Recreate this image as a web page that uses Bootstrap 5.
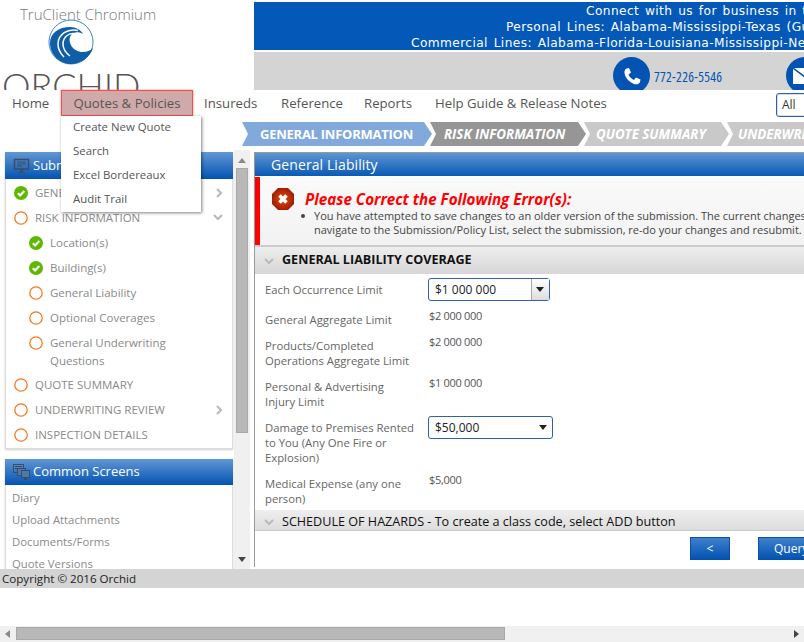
<!DOCTYPE html>
<html lang="en">
<head>
<meta charset="utf-8">
<title>Orchid</title>
<link href="https://cdn.jsdelivr.net/npm/bootstrap@5.3.0/dist/css/bootstrap.min.css" rel="stylesheet">
<style>
html,body{height:642px;overflow:hidden;background:#fff}
body{font-family:"Open Sans","Noto Sans",sans-serif;font-size:12px;color:#555;width:804px;position:relative}
svg{display:block;flex:none}
.top-head{height:90px;overflow:hidden}
.logo-box{width:254px;height:90px;overflow:hidden;flex:none}
.logo-title{font-size:15px;line-height:20px;color:#7a7a7a;padding:4px 0 0 20px;font-weight:300;height:19px;white-space:nowrap}
.logo-mark{margin:0 0 0 48px;height:46px}
.logo-word{font-family:"Lato",sans-serif;font-weight:300;font-size:36px;line-height:28px;color:#555;padding-left:2px;margin-top:6px}
.head-right{width:550px;padding-top:2px;overflow:hidden}
.blue-band{background:#0358b8;height:48px;color:#fff;font-family:"DejaVu Sans",sans-serif;font-size:12.2px;line-height:16px;white-space:nowrap;letter-spacing:.4px;word-spacing:1.5px;overflow:hidden;padding-top:1px}
.ln1{padding-left:332px}.ln2{padding-left:252px}.ln3{padding-left:157px}
.gray-band{background:#d4d4d4;height:38px;margin-top:2px;overflow:hidden;align-items:flex-start;padding:5px 0 0 359px}
.round-ic{width:37px;height:37px;border-radius:50%;background:#0353b2;flex:none;align-items:center;justify-content:center}
.tel-txt{color:#0353b2;font-size:13.5px;line-height:18px;margin:11px 0 0 4px;width:132px;flex:none;font-stretch:condensed;letter-spacing:.3px;white-space:nowrap}
.main-nav{height:26px;position:relative;font-size:13.2px;color:#555;align-items:center}
.nav-it{white-space:nowrap;line-height:26px;flex:none}
.nav-home{margin-left:12px;width:49px}
.nav-sel{width:132px;height:26px;background:#d0aaaa;border:1px solid #f25050;text-align:center;line-height:24px;box-shadow:0 0 2px #f07070}
.nav-ins{margin-left:11px;width:77px}.nav-ref{width:83px}.nav-rep{width:71px}.nav-help{width:341px}
.all-sel{width:60px;height:24px;border:1px solid #2c62b0;border-radius:3px;background:#fff;padding-left:5px;line-height:22px;font-size:12px;color:#333;box-shadow:inset 0 0 0 1px #ddd;margin-top:3px;align-self:flex-start;flex:none}
.drop-menu{position:absolute;left:61px;top:26px;width:140px;height:96px;background:#fff;box-shadow:1px 1px 3px rgba(0,0,0,.5);z-index:5;padding-left:12px;font-size:11.4px;color:#555}
.drop-menu div{height:24px;line-height:22px}
.step-row{height:34px;padding:6px 0 0 242px;overflow:hidden}
.step-one{height:24px;line-height:24px;color:#fff;font-weight:700;font-size:13.3px;white-space:nowrap;flex:none;font-style:italic}
.step-a{width:190px;background:#82a9dc;padding-left:18px;font-size:13px;letter-spacing:-.25px;font-style:normal;clip-path:polygon(0 0,182px 0,190px 50%,182px 100%,0 100%,6px 50%)}
.step-b{width:156px;margin-left:-2px;background:#969696;padding-left:14px;clip-path:polygon(0 0,148px 0,156px 50%,148px 100%,0 100%,6px 50%)}
.step-c{width:145px;margin-left:-2px;background:#c9c9c9;padding-left:12px;clip-path:polygon(0 0,137px 0,145px 50%,137px 100%,0 100%,6px 50%)}
.step-d{width:120px;margin-left:-2px;background:#c9c9c9;padding-left:11px;clip-path:polygon(0 0,120px 0,120px 100%,0 100%,6px 50%)}
.work-area{height:419px;overflow:hidden}
.side-col{width:234px;flex:none;padding:2px 0 0 5px;overflow:hidden;height:419px}
.side-card{width:228px;background:#fff;border:1px solid #ddd;border-top:0;box-shadow:0 1px 2px rgba(0,0,0,.2);height:297px;font-size:11.5px;color:#8a8a8a}
.side-card2{height:200px;margin-top:10px}
.blue-head{height:27px;background:linear-gradient(#6297d4,#0353b2);color:#fff;font-size:13px;align-items:center;gap:3px;padding-left:8px;margin:0 -1px 1px}
.side-card2 .blue-head{height:26px;margin-bottom:2px}
.tree-it{height:25px;align-items:center;padding-left:8px;gap:7px;position:relative;white-space:nowrap}
.tree-it.sub{padding-left:23px}
.tree-two{height:42px;align-items:flex-start;padding-top:4px;line-height:18px;white-space:normal}
.ring-low{margin-top:2px}
.chev-r{position:absolute;right:9px;top:8px}
.plain-link{padding:0 0 0 6px;height:22px;line-height:22px;white-space:nowrap;font-size:11.3px}
.vbar{width:16px;flex:none;background:#f0f0f0;height:419px;position:relative}
.vthumb{position:absolute;left:2px;top:18px;width:12px;height:265px;background:#b8b8b8;border:1px solid #a8a8a8}
.arr-u{position:absolute;left:4px;top:8px;width:0;height:0;border:4px solid transparent;border-top:0;border-bottom:5px solid #8a8a8a}
.arr-d{position:absolute;left:4px;top:407px;width:0;height:0;border:4px solid transparent;border-bottom:0;border-top:5px solid #444}
.gap-col{width:4px;flex:none}
.right-col{flex:none;width:550px;border-left:1px solid #999;height:415px;overflow:hidden;border-top:1px solid #999;margin-top:2px}
.gl-head{height:22px;background:linear-gradient(#5f95d3,#0b5cb6);color:#fff;font-size:14px;line-height:24px;padding-left:16px;letter-spacing:.1px}
.gl-line{height:2px;background:#0a5cb8;border-bottom:1px solid #fff}
.err-box{height:68px;border-left:5px solid #f00;background:linear-gradient(#fafafa,#f2f2f2);padding:10px 0 0 11px;white-space:nowrap}
.err-title{font-size:15.2px;font-weight:700;font-style:italic;color:#f00;line-height:22px;margin-left:10px}
.err-list{padding-left:43px;color:#444;font-size:11px;line-height:14px;margin-top:-2px;position:relative}
.err-dot{position:absolute;left:30px;top:5px;width:4px;height:4px;border-radius:50%;background:#444}
.sec-band{height:29px;background:linear-gradient(#eee,#d6d6d6);border-top:2px solid #ccc;align-items:center;padding-left:9px;gap:8px;color:#111;font-weight:700;font-size:12.6px;white-space:nowrap}
.sec-band2{height:21px;background:linear-gradient(#eee,#ddd);border-top:0;border-bottom:1px solid #ccc;font-weight:400;padding-top:4px}
.form-row{align-items:flex-start;padding-left:10px;padding-top:1px;color:#666;font-size:11.3px;line-height:15px}
.frm-lab{width:163px;flex:none;padding-right:10px;padding-top:4px}
.frm-val{font-size:11px;line-height:13px;color:#555;letter-spacing:-.3px;padding:1px 0 0 1px}
.row-h33{height:33px;padding-top:4px}.row-h26{height:26px}.row-h41{height:41px}.row-h56{height:56px}.row-h39{height:39px}
.combo-one{width:122px;height:23px;border:1px solid #2c62b0;border-radius:3px;background:#fff;color:#222;line-height:21px;padding-left:6px;position:relative;font-size:12px}
.combo-wide{width:125px}
.combo-btn{position:absolute;right:0;top:0;width:18px;height:21px;border-left:1px solid #aaa;background:linear-gradient(#fff,#ddd)}
.caret-dn{position:absolute;right:5px;top:8px;width:0;height:0;border:4px solid transparent;border-bottom:0;border-top:5px solid #222}
.btn-strip{padding:6px 0 0 435px;gap:28px}
.blue-btn{height:23px;width:40px;background:linear-gradient(#3f80cc,#0353b2);border:1px solid #0a4ea6;color:#fff;text-align:center;line-height:21px;flex:none}
.btn-query{width:60px;text-align:left;padding-left:15px}
.foot-bar{height:19px;background:#d4d4d4;color:#222;font-size:11.6px;line-height:19px;padding-left:2px}
.spacer-zone{height:38px}
.hbar{height:16px;background:#f0f0f0;position:relative}
.hthumb{position:absolute;left:16px;top:1px;width:489px;height:13px;background:#b8b8b8;border:1px solid #a8a8a8}
.arr-l{position:absolute;left:5px;top:4px;width:0;height:0;border:4px solid transparent;border-left:0;border-right:5px solid #8a8a8a}
.arr-r{position:absolute;right:5px;top:4px;width:0;height:0;border:4px solid transparent;border-right:0;border-left:5px solid #444}
.svg-defs{position:absolute}
</style>
</head>
<body>
<svg class="svg-defs" width="0" height="0">
<defs>
<symbol id="okc" viewBox="0 0 14 14"><circle cx="7" cy="7" r="7" fill="#5fb800"/><path d="M3.8 7.2l2.3 2.2 4.2-4.4" fill="none" stroke="#fff" stroke-width="2.2"/></symbol>
<symbol id="ring" viewBox="0 0 14 14"><circle cx="7" cy="7" r="6.2" fill="#fff" stroke="#f5791f" stroke-width="1.3"/></symbol>
<symbol id="chr" viewBox="0 0 8 10"><path d="M2 1l4 4-4 4" fill="none" stroke="#bbb" stroke-width="2.2"/></symbol>
<symbol id="chd" viewBox="0 0 10 8"><path d="M1 2l4 4 4-4" fill="none" stroke="#bbb" stroke-width="2.2"/></symbol>
<radialGradient id="errg"><stop offset="0" stop-color="#e2500f"/><stop offset="1" stop-color="#a01e02"/></radialGradient>
</defs>
</svg>
<header class="top-head d-flex">
  <div class="logo-box">
    <div class="logo-title">TruClient Chromium</div>
    <div class="logo-mark">
      <svg width="46" height="46" viewBox="0 0 46 46"><circle cx="23" cy="23" r="22" fill="#fff" stroke="#3a85c4" stroke-width="1"/><path d="M2 24C2 14 11 8 22 8c6 0 11 3 13 7-5-3-11-2-13 3-2 6 3 14 11 15 5 .5 9-1 12-4-3 9-12 16-22 16C11 45 2 35 2 24z" fill="#0f5fa8"/><path d="M30 11.500C20 9 10 15 10 25c0 6 3 10 6 13" fill="none" stroke="#fff" stroke-width="1.500"/><path d="M28 15c-8-2-13 4-13 10 0 5 3 9 7 12" fill="none" stroke="#fff" stroke-width="1.500"/></svg>
    </div>
    <div class="logo-word">ORCHID</div>
  </div>
  <div class="head-right flex-grow-1">
    <div class="blue-band">
      <div class="ln1">Connect with us for business in the following states</div>
      <div class="ln2">Personal Lines: Alabama-Mississippi-Texas (Gulf Coast)</div>
      <div class="ln3">Commercial Lines: Alabama-Florida-Louisiana-Mississippi-New York</div>
    </div>
    <div class="gray-band d-flex">
      <div class="round-ic d-flex"><svg width="22" height="22" viewBox="0 0 22 22"><path d="M5.500 3.500L8 3l2 4.500-2.500 2c1 2.500 3 4.500 5.500 5.500l2-2.500 4.500 2-.5 2.500c-1 2.500-4 3-7 1.500-5-2.500-8-6.500-8.500-10.500-.2-2 .5-3.500 2-4.500z" fill="#fff"/></svg></div>
      <div class="tel-txt">772-226-5546</div>
      <div class="round-ic d-flex"><svg width="24" height="18" viewBox="0 0 24 18"><rect y="1" width="24" height="16" fill="#fff"/><path d="M0 1l12 9 12-9" fill="none" stroke="#0353b2" stroke-width="1.500"/></svg></div>
    </div>
  </div>
</header>
<nav class="main-nav d-flex">
  <div class="nav-it nav-home">Home</div>
  <div class="nav-it nav-sel">Quotes &amp; Policies</div>
  <div class="nav-it nav-ins">Insureds</div>
  <div class="nav-it nav-ref">Reference</div>
  <div class="nav-it nav-rep">Reports</div>
  <div class="nav-it nav-help">Help Guide &amp; Release Notes</div>
  <div class="all-sel">All</div>
  <div class="drop-menu"><div>Create New Quote</div><div>Search</div><div>Excel Bordereaux</div><div>Audit Trail</div></div>
</nav>
<div class="step-row d-flex">
  <div class="step-one step-a">GENERAL INFORMATION</div>
  <div class="step-one step-b">RISK INFORMATION</div>
  <div class="step-one step-c">QUOTE SUMMARY</div>
  <div class="step-one step-d">UNDERWRITING REVIEW</div>
</div>
<main class="work-area d-flex">
  <aside class="side-col">
    <div class="side-card">
      <div class="blue-head d-flex"><svg width="17" height="16" viewBox="0 0 17 16"><rect x="1.500" y="1.500" width="14" height="9.500" fill="none" stroke="#3d4c60" stroke-width="1.500"/><path d="M4 4h9M4 6h9M4 8h5" stroke="#3d4c60"/><path d="M7 11.500h3V14H7zM5 14h7v1H5z" fill="#3d4c60"/></svg><span>Submission</span></div>
      <div class="tree-it d-flex"><svg width="14" height="14"><use href="#okc"/></svg>GENERAL INFORMATION<svg class="chev-r" width="8" height="10"><use href="#chr"/></svg></div>
      <div class="tree-it d-flex"><svg width="14" height="14"><use href="#ring"/></svg>RISK INFORMATION<svg class="chev-r" width="10" height="8"><use href="#chd"/></svg></div>
      <div class="tree-it sub d-flex"><svg width="14" height="14"><use href="#okc"/></svg>Location(s)</div>
      <div class="tree-it sub d-flex"><svg width="14" height="14"><use href="#okc"/></svg>Building(s)</div>
      <div class="tree-it sub d-flex"><svg width="14" height="14"><use href="#ring"/></svg>General Liability</div>
      <div class="tree-it sub d-flex"><svg width="14" height="14"><use href="#ring"/></svg>Optional Coverages</div>
      <div class="tree-it sub tree-two d-flex"><svg class="ring-low" width="14" height="14"><use href="#ring"/></svg><span>General Underwriting<br>Questions</span></div>
      <div class="tree-it d-flex"><svg width="14" height="14"><use href="#ring"/></svg>QUOTE SUMMARY</div>
      <div class="tree-it d-flex"><svg width="14" height="14"><use href="#ring"/></svg>UNDERWRITING REVIEW<svg class="chev-r" width="8" height="10"><use href="#chr"/></svg></div>
      <div class="tree-it d-flex"><svg width="14" height="14"><use href="#ring"/></svg>INSPECTION DETAILS</div>
    </div>
    <div class="side-card side-card2">
      <div class="blue-head d-flex"><svg width="17" height="16" viewBox="0 0 17 16"><rect x=".5" y=".5" width="10" height="8" fill="none" stroke="#3d4c60"/><path d="M2 2.500h7M2 4.500h7" stroke="#3d4c60"/><rect x="4.500" y="4.500" width="8" height="7" fill="#4a78b0" stroke="#3d4c60"/><rect x="8.500" y="6.500" width="8" height="7" fill="#4a78b0" stroke="#3d4c60"/><path d="M11 13.500h3V16h-3z" fill="#3d4c60"/></svg><span>Common Screens</span></div>
      <div class="plain-link">Diary</div>
      <div class="plain-link">Upload Attachments</div>
      <div class="plain-link">Documents/Forms</div>
      <div class="plain-link">Quote Versions</div>
    </div>
  </aside>
  <div class="vbar"><span class="arr-u"></span><span class="vthumb"></span><span class="arr-d"></span></div>
  <div class="gap-col"></div>
  <section class="right-col">
    <div class="gl-head">General Liability</div>
    <div class="gl-line"></div>
    <div class="err-box">
      <div class="d-flex align-items-center">
        <svg width="24" height="24" viewBox="0 0 24 24"><path d="M7 1h10l6 6v10l-6 6H7l-6-6V7z" fill="url(#errg)"/><path d="M8.500 8.500l7 7M15.500 8.500l-7 7" stroke="#fff" stroke-width="3.500"/></svg>
        <div class="err-title">Please Correct the Following Error(s):</div>
      </div>
      <div class="err-list"><span class="err-dot"></span>You have attempted to save changes to an older version of the submission. The current changes cannot be saved, please<br>navigate to the Submission/Policy List, select the submission, re-do your changes and resubmit.</div>
    </div>
    <div class="sec-band d-flex"><svg width="10" height="8"><use href="#chd"/></svg>GENERAL LIABILITY COVERAGE</div>
    <div class="form-row row-h33 d-flex"><div class="frm-lab">Each Occurrence Limit</div><div class="combo-one">$1 000 000<span class="combo-btn"><span class="caret-dn"></span></span></div></div>
    <div class="form-row row-h26 d-flex"><div class="frm-lab">General Aggregate Limit</div><div class="frm-val">$2 000 000</div></div>
    <div class="form-row row-h41 d-flex"><div class="frm-lab">Products/Completed Operations Aggregate Limit</div><div class="frm-val">$2 000 000</div></div>
    <div class="form-row row-h41 d-flex"><div class="frm-lab">Personal &amp; Advertising<br>Injury Limit</div><div class="frm-val">$1 000 000</div></div>
    <div class="form-row row-h56 d-flex"><div class="frm-lab">Damage to Premises Rented to You (Any One Fire or Explosion)</div><div class="combo-one combo-wide">$50,000<span class="caret-dn"></span></div></div>
    <div class="form-row row-h39 d-flex"><div class="frm-lab">Medical Expense (any one person)</div><div class="frm-val">$5,000</div></div>
    <div class="sec-band sec-band2 d-flex"><svg width="10" height="8"><use href="#chd"/></svg>SCHEDULE OF HAZARDS - To create a class code, select ADD button</div>
    <div class="btn-strip d-flex"><div class="blue-btn">&lt;</div><div class="blue-btn btn-query">Query</div></div>
  </section>
</main>
<div class="foot-bar">Copyright © 2016 Orchid</div>
<div class="spacer-zone"></div>
<div class="hbar"><span class="arr-l"></span><span class="hthumb"></span><span class="arr-r"></span></div>
<script src="https://cdn.jsdelivr.net/npm/bootstrap@5.3.0/dist/js/bootstrap.bundle.min.js"></script>
</body>
</html>
